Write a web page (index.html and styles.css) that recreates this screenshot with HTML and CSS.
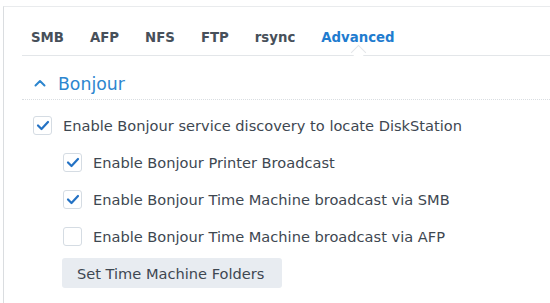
FILE: index.html
```html
<!DOCTYPE html>
<html>
<head>
<meta charset="utf-8">
<link rel="stylesheet" href="styles.css">
</head>
<body>
<div class="window">
  <div class="content">
    <div class="tabs">
      <span class="tab">SMB</span>
      <span class="tab">AFP</span>
      <span class="tab">NFS</span>
      <span class="tab">FTP</span>
      <span class="tab">rsync</span>
      <span class="tab active">Advanced<span class="notch"></span></span>
    </div>
    <div class="section-head">
      <svg class="chev" width="12" height="8" viewBox="0 0 12 8"><path d="M1.5 6.5 L6 2 L10.5 6.5" fill="none" stroke="#2d86cf" stroke-width="2" stroke-linecap="round" stroke-linejoin="round"/></svg>
      <span class="section-title">Bonjour</span>
    </div>
    <div class="rows">
      <label class="row">
        <span class="cb"><svg width="14" height="11" viewBox="0 0 14 11"><path d="M2 5.5 L5.5 9 L12 2" fill="none" stroke="#2472c4" stroke-width="2.2" stroke-linecap="round" stroke-linejoin="round"/></svg></span>
        <span class="lbl">Enable Bonjour service discovery to locate DiskStation</span>
      </label>
      <div class="sub">
        <label class="row">
          <span class="cb"><svg width="14" height="11" viewBox="0 0 14 11"><path d="M2 5.5 L5.5 9 L12 2" fill="none" stroke="#2472c4" stroke-width="2.2" stroke-linecap="round" stroke-linejoin="round"/></svg></span>
          <span class="lbl">Enable Bonjour Printer Broadcast</span>
        </label>
        <label class="row">
          <span class="cb"><svg width="14" height="11" viewBox="0 0 14 11"><path d="M2 5.5 L5.5 9 L12 2" fill="none" stroke="#2472c4" stroke-width="2.2" stroke-linecap="round" stroke-linejoin="round"/></svg></span>
          <span class="lbl">Enable Bonjour Time Machine broadcast via SMB</span>
        </label>
        <label class="row">
          <span class="cb"></span>
          <span class="lbl">Enable Bonjour Time Machine broadcast via AFP</span>
        </label>
      </div>
      <div class="btn-row">
        <button class="btn">Set Time Machine Folders</button>
      </div>
    </div>
  </div>
</div>
</body>
</html>
```

FILE: styles.css
```css
html, body {
  margin: 0;
  padding: 0;
  background: #ffffff;
  font-family: "DejaVu Sans", Verdana, sans-serif;
  width: 550px;
  height: 303px;
  overflow: hidden;
}
.window {
  margin: 6px 0 0 3px;
  border-left: 1px solid #dadde0;
  border-top: 1px solid #e9ebed;
  height: 300px;
}
.content {
  padding-left: 18px;
}
.tabs {
  display: flex;
  align-items: center;
  gap: 26px;
  height: 48px;
  padding-left: 9px;
  border-bottom: 1px solid #e3e6e9;
  position: relative;
}
.tab {
  font-size: 13.3px;
  font-weight: bold;
  color: #47505a;
  padding-top: 12px;
  position: relative;
}
.tab.active {
  color: #1f7ccf;
}
.notch {
  position: absolute;
  left: 50%;
  bottom: -13px;
  width: 10px;
  height: 10px;
  margin-left: -5px;
  background: #ffffff;
  border-left: 1px solid #e3e6e9;
  border-top: 1px solid #e3e6e9;
  transform: rotate(45deg);
}
.section-head {
  display: flex;
  align-items: center;
  height: 44px;
  box-sizing: border-box;
  padding-left: 12px;
  padding-top: 12px;
  border-bottom: 1px dotted #d9dde1;
}
.chev {
  margin-right: 12px;
  margin-top: -2px;
}
.section-title {
  font-size: 17.3px;
  color: #2d86cf;
}
.rows {
  padding-left: 11px;
  padding-top: 7px;
}
.row {
  display: flex;
  align-items: center;
  height: 37px;
}
.cb {
  border: 1px solid #d5dce3;
  border-radius: 3px;
  background: #fff;
  display: flex;
  align-items: center;
  justify-content: center;
  margin-right: 11px;
  box-sizing: border-box;
  width: 19px;
  height: 19px;
  flex: none;
}
.lbl {
  font-size: 14.6px;
  color: #3e4751;
  white-space: nowrap;
}
.sub {
  padding-left: 30px;
}
.btn-row {
  padding-left: 29px;
  padding-top: 3px;
}
.btn {
  font-family: "DejaVu Sans", Verdana, sans-serif;
  font-size: 14.6px;
  color: #3e4751;
  background: #e8ecf1;
  border: none;
  border-radius: 3px;
  height: 30px;
  width: 220px;
  text-align: left;
  padding: 0 0 0 15px;
}
```
